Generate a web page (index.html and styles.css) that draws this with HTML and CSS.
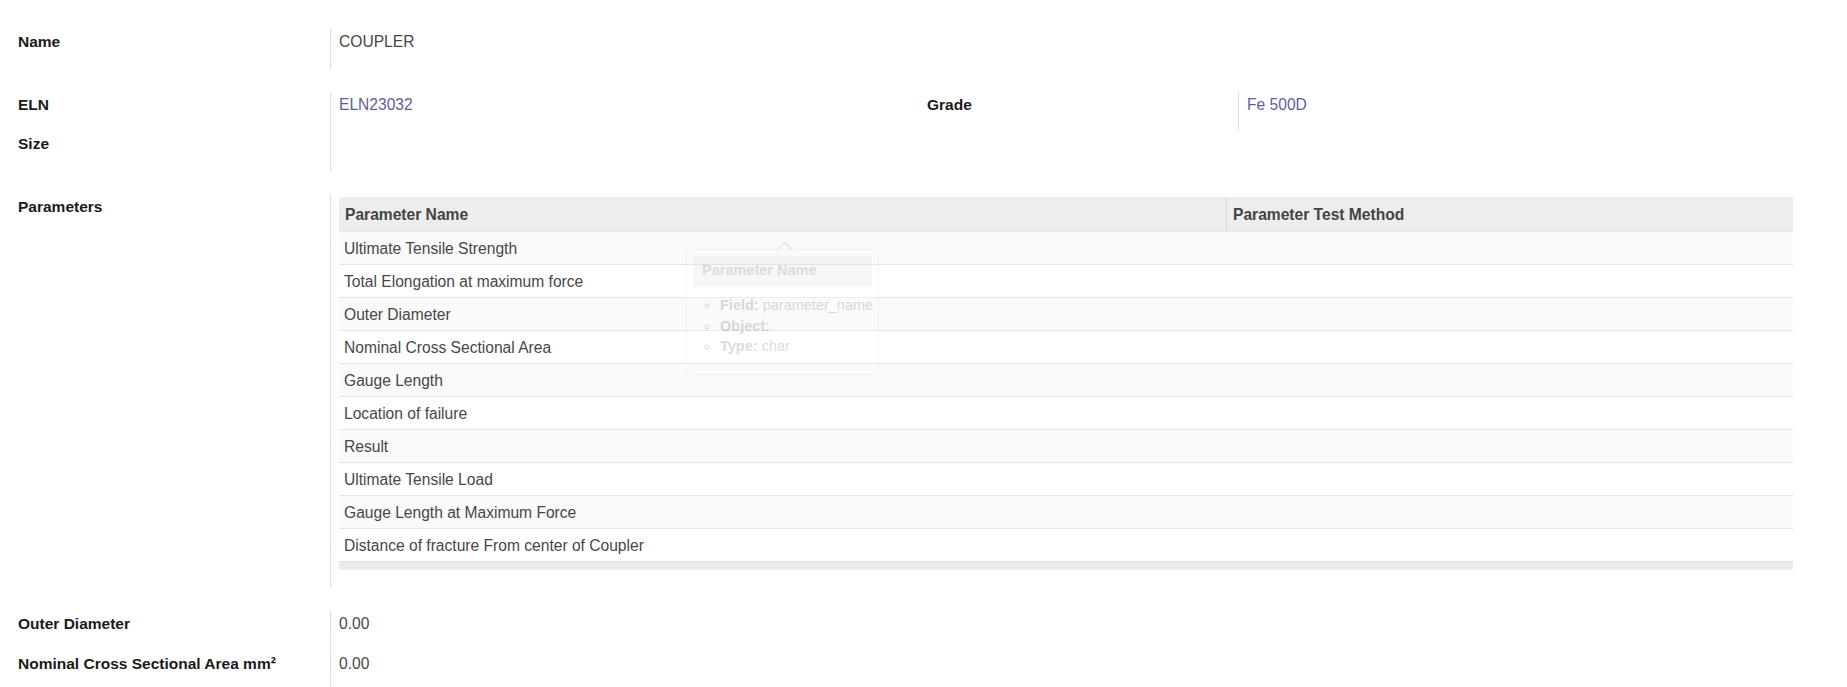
FILE: index.html
```html
<!DOCTYPE html>
<html lang="en">
  <head>
    <meta charset="UTF-8" />
    <title>Coupler</title>
    <link rel="stylesheet" href="styles.css">
  </head>
  <body>
    <div class="sheet">
      <div class="section">
        <div class="group">
          <div class="field">
            <div class="label">Name</div>
            <div class="value">COUPLER</div>
          </div>
        </div>
      </div>

      <div class="section split">
        <div class="group group-left">
          <div class="field">
            <div class="label">ELN</div>
            <div class="value link">ELN23032</div>
          </div>
          <div class="field">
            <div class="label">Size</div>
            <div class="value"></div>
          </div>
        </div>
        <div class="group group-right">
          <div class="field">
            <div class="label">Grade</div>
            <div class="value link">Fe 500D</div>
          </div>
        </div>
      </div>

      <div class="section">
        <div class="group">
          <div class="field">
            <div class="label">Parameters</div>
            <div class="value value-table">
              <div class="table-wrap">
                <table class="param-table">
                  <thead>
                    <tr>
                      <th class="col-name">Parameter Name</th>
                      <th class="col-method">Parameter Test Method</th>
                    </tr>
                  </thead>
                  <tbody>
                    <tr><td>Ultimate Tensile Strength</td><td></td></tr>
                    <tr><td>Total Elongation at maximum force</td><td></td></tr>
                    <tr><td>Outer Diameter</td><td></td></tr>
                    <tr><td>Nominal Cross Sectional Area</td><td></td></tr>
                    <tr><td>Gauge Length</td><td></td></tr>
                    <tr><td>Location of failure</td><td></td></tr>
                    <tr><td>Result</td><td></td></tr>
                    <tr><td>Ultimate Tensile Load</td><td></td></tr>
                    <tr><td>Gauge Length at Maximum Force</td><td></td></tr>
                    <tr><td>Distance of fracture From center of Coupler</td><td></td></tr>
                  </tbody>
                  <tfoot>
                    <tr><td colspan="2"></td></tr>
                  </tfoot>
                </table>

                <div class="popover">
                  <svg class="popover-arrow" width="16" height="8" viewBox="0 0 16 8">
                    <polyline points="0.5,7.5 8,0.8 15.5,7.5" fill="none" stroke="#000" stroke-width="1" />
                  </svg>
                  <div class="popover-header">Parameter Name</div>
                  <ul class="popover-body">
                    <li><b>Field:</b> parameter_name</li>
                    <li><b>Object:</b></li>
                    <li><b>Type:</b> char</li>
                  </ul>
                </div>
              </div>
            </div>
          </div>
        </div>
      </div>

      <div class="section">
        <div class="group">
          <div class="field">
            <div class="label">Outer Diameter</div>
            <div class="value">0.00</div>
          </div>
          <div class="field">
            <div class="label">Nominal Cross Sectional Area mm²</div>
            <div class="value">0.00</div>
          </div>
        </div>
      </div>
    </div>
  </body>
</html>
```

FILE: styles.css
```css
body {
  margin: 0;
  font-family: 'Liberation Sans', Arial, sans-serif;
  font-size: 15.6px;
  line-height: 21px;
  color: #474747;
  background: #ffffff;
}

.sheet {
  padding: 29px 54px 0 18px;
}

.section {
  margin-bottom: 23px;
}

.split {
  display: flex;
}

.group-left {
  width: 909px;
}

.group-right {
  flex: 1;
}

.field {
  display: grid;
  grid-template-columns: 312px 1fr;
}

.group-right .field {
  grid-template-columns: 311px 1fr;
}

.label {
  font-weight: bold;
  font-size: 15.5px;
  color: #1a1a1a;
  padding-top: 2px;
}

.value {
  border-left: 1px solid #dcdcdc;
  padding: 2px 0 0 8px;
  min-height: 37.5px;
}

.link {
  color: #5f5d98;
}

.value-table {
  padding: 3.5px 0 18px 8px;
}

.table-wrap {
  position: relative;
}

.param-table {
  width: 100%;
  border-collapse: collapse;
  color: #474747;
}

.param-table th {
  background: #ededed;
  height: 34px;
  padding: 0 6px;
  text-align: left;
  font-weight: bold;
  color: #444444;
}

.param-table .col-name {
  width: 875px;
}

.param-table .col-method {
  border-left: 1px solid #dadada;
}

.param-table tbody td {
  height: 32px;
  padding: 0 5px;
  border-top: 1px solid #e6e6e6;
}

.param-table tbody tr:nth-child(odd) td {
  background: #fafafa;
}

.param-table tfoot td {
  height: 8px;
  padding: 0;
  background: #ececec;
  border-top: 1px solid #e2e2e2;
}

/* tooltip fading out over the table */
.popover {
  position: absolute;
  left: 347px;
  top: 52px;
  width: 193px;
  height: 126px;
  box-sizing: border-box;
  padding: 6px;
  background: rgba(255, 255, 255, 0.9);
  border: 1px solid #d0d0d0;
  border-radius: 5px;
  opacity: 0.16;
  color: #212529;
}

.popover-arrow {
  position: absolute;
  left: 90px;
  top: -8px;
}

.popover-header {
  background: #d4d4d4;
  height: 31px;
  line-height: 29px;
  padding-left: 9px;
  font-weight: bold;
  font-size: 14.5px;
}

.popover-body {
  margin: 8px 0 0;
  padding-left: 27px;
  list-style: circle;
  line-height: 20.5px;
  font-size: 14.5px;
  white-space: nowrap;
}
```
